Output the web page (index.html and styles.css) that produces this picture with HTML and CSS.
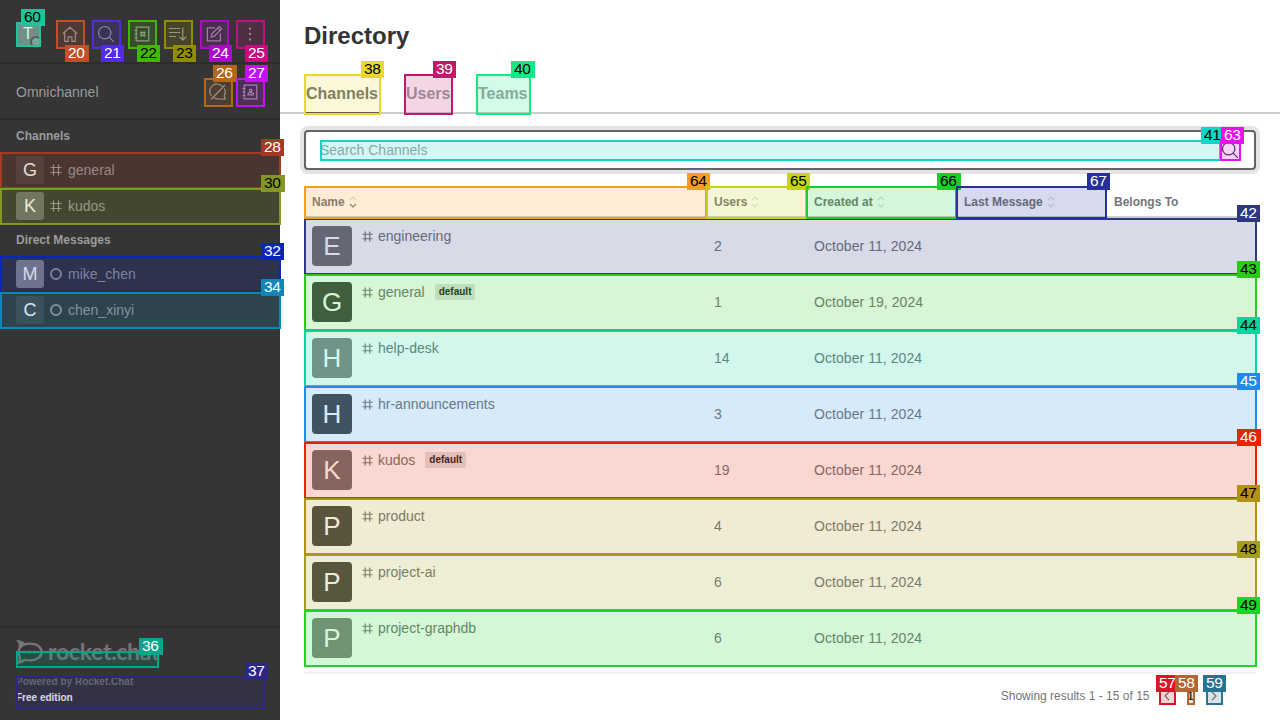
FILE: index.html
```html
<!DOCTYPE html>
<html lang="en">
<head>
<meta charset="utf-8">
<title>Directory</title>
<link rel="stylesheet" href="styles.css">
</head>
<body>
<svg class="defs" aria-hidden="true">
  <symbol id="hash" viewBox="0 0 12 12"><path d="M3.5 .5v11M8.5 .5v11M.5 3.5h11M.5 8.5h11"/></symbol>
  <symbol id="search" viewBox="0 0 20 20"><circle cx="8.7" cy="8.7" r="6.2"/><path d="M13.2 13.2l4.6 4.6"/></symbol>
  <symbol id="sort" viewBox="0 0 8 12"><path class="up" d="M1 4l3-3 3 3"/><path class="down" d="M1 8l3 3 3-3"/></symbol>
</svg>
<div class="app">
  <aside class="sidebar">
    <header class="toolbar">
      <div class="me"><span class="letter">T</span><i class="presence"></i><span class="mark c60"><b class="wide">60</b></span></div>
      <div class="tool"><svg viewBox="0 0 20 20"><path d="M2.8 9.8L10 3.2l7.2 6.6M4.7 8.5v8.8h3.4v-4.4h3.8v4.4h3.4V8.5"/></svg><span class="mark low c20"><b class="wide">20</b></span></div>
      <div class="tool"><svg><use href="#search"/></svg><span class="mark low c21"><b>21</b></span></div>
      <div class="tool"><svg viewBox="0 0 20 20"><path d="M4.2 3.2h12.6v13.6H4.2zM2.5 6.5h3M2.5 10h3M2.5 13.5h3M9.4 7.3v5.4M12.2 7.3v5.4M8.1 8.6h5.4M8.1 11.4h5.4"/></svg><span class="mark low c22"><b>22</b></span></div>
      <div class="tool"><svg viewBox="0 0 20 20"><path d="M1 4.500h11M1 8.500h11M1 12.500h7M14.800 3.500v12.400M11.300 12.700l3.500 3.500 3.500-3.500"/></svg><span class="mark low c23"><b>23</b></span></div>
      <div class="tool"><svg viewBox="0 0 20 20"><path d="M11 3.8H3.4v13h13V9.5M7.2 13l.7-3.2 7.4-7.3 2.4 2.4-7.4 7.3zM13.6 4.2L16 6.6"/></svg><span class="mark low c24"><b>24</b></span></div>
      <div class="tool"><svg viewBox="0 0 20 20"><path class="dots" d="M10 4.6v.01M10 10v.01M10 15.4v.01"/></svg><span class="mark low c25"><b>25</b></span></div>
    </header>
    <div class="omni">
      <span class="omni-title">Omnichannel</span>
      <div class="tool"><svg viewBox="0 0 20 20"><path d="M3.6 14.2A7.2 7.2 0 0 1 14.5 4.4M16.3 6.5a7.2 7.2 0 0 1-.2 7.3l1.2 3.2H10a7.2 7.2 0 0 1-4-1.2M3 17.5L17 3"/></svg><span class="mark c26"><b class="wide">26</b></span></div>
      <div class="tool"><svg viewBox="0 0 20 20"><path d="M4.2 3.2h12.6v13.6H4.2zM2.5 6.5h3M2.5 10h3M2.5 13.5h3M8 12.8v-1.2l1.5-1h2.4l1.5 1v1.2z"/><circle cx="10.7" cy="8.6" r="1.2"/></svg><span class="mark c27"><b>27</b></span></div>
    </div>
    <nav class="rooms">
      <h3>Channels</h3>
      <div class="room"><span class="avatar s42">G</span><svg><use href="#hash"/></svg>general<span class="mark c28"><b>28</b></span></div>
      <div class="room"><span class="avatar s6d">K</span><svg><use href="#hash"/></svg>kudos<span class="mark c30"><b class="wide">30</b></span></div>
      <h3>Direct Messages</h3>
      <div class="room"><span class="avatar s84">M</span><i class="offline"></i>mike_chen<span class="mark c32"><b>32</b></span></div>
      <div class="room"><span class="avatar s46">C</span><i class="offline"></i>chen_xinyi<span class="mark c34"><b>34</b></span></div>
    </nav>
    <footer class="brand">
      <div class="logo">
        <svg viewBox="0 0 27 24"><path class="bubble" d="M0 0C4 0 7 1.200 9 3C19 .8 27 5.500 27 12S19 23 9 21C7 22.800 4 24 0 24C2.600 21.500 3.400 19 2.600 16.800C1 14 1 10 2.600 7.200C3.400 5 2.600 2.500 0 0Z"/><path class="hole" d="M14 4.800C20 4.800 24.300 8 24.300 12S20 19.200 14 19.200C11.500 19.200 9.500 19 8 18.400C7 19.600 6 20.300 4.700 20.700C5.400 19 5.400 17.500 4.700 16C3.500 13.500 3.500 10.500 5 8.200C6.600 6 10 4.800 14 4.800Z"/><circle cx="8.500" cy="12" r="1.400"/><circle cx="13.500" cy="12" r="1.400"/><circle cx="18.500" cy="12" r="1.400"/></svg>
        <span>rocket.chat</span>
        <span class="mark c36"><b class="wide">36</b></span>
      </div>
      <div class="edition"><span class="powered">Powered by Rocket.Chat</span><span class="free">Free edition</span><span class="mark c37"><b>37</b></span></div>
    </footer>
  </aside>
  <main class="page">
    <h1>Directory</h1>
    <div class="tabs">
      <div class="tab active">Channels<span class="mark c38"><b>38</b></span></div>
      <div class="tab users">Users<span class="mark c39"><b>39</b></span></div>
      <div class="tab teams">Teams<span class="mark c40"><b class="wide">40</b></span></div>
    </div>
    <div class="content">
      <div class="search">
        <div class="field">Search Channels<span class="mark c41"><b>41</b></span></div>
        <div class="glass"><svg><use href="#search"/></svg><span class="mark c63"><b>63</b></span></div>
      </div>
      <div class="grid head">
        <div class="cell sorted">Name<svg><use href="#sort"/></svg><span class="mark c64"><b>64</b></span></div>
        <div class="cell">Users<svg><use href="#sort"/></svg><span class="mark c65"><b>65</b></span></div>
        <div class="cell">Created at<svg><use href="#sort"/></svg><span class="mark c66"><b class="wide">66</b></span></div>
        <div class="cell">Last Message<svg><use href="#sort"/></svg><span class="mark c67"><b>67</b></span></div>
        <div class="cell">Belongs To</div>
      </div>
      <div class="grid row"><div class="channel"><span class="avatar big s73">E</span><span class="name"><svg><use href="#hash"/></svg>engineering</span></div><div class="val">2</div><div class="val">October 11, 2024</div><span class="mark c42"><b>42</b></span></div>
      <div class="grid row"><div class="channel"><span class="avatar big s46">G</span><span class="name"><svg><use href="#hash"/></svg>general<em>default</em></span></div><div class="val">1</div><div class="val">October 19, 2024</div><span class="mark c43"><b>43</b></span></div>
      <div class="grid row"><div class="channel"><span class="avatar big s84">H</span><span class="name"><svg><use href="#hash"/></svg>help-desk</span></div><div class="val">14</div><div class="val">October 11, 2024</div><span class="mark c44"><b>44</b></span></div>
      <div class="grid row"><div class="channel"><span class="avatar big s46">H</span><span class="name"><svg><use href="#hash"/></svg>hr-announcements</span></div><div class="val">3</div><div class="val">October 11, 2024</div><span class="mark c45"><b>45</b></span></div>
      <div class="grid row"><div class="channel"><span class="avatar big s73">K</span><span class="name"><svg><use href="#hash"/></svg>kudos<em>default</em></span></div><div class="val">19</div><div class="val">October 11, 2024</div><span class="mark c46"><b class="wide">46</b></span></div>
      <div class="grid row"><div class="channel"><span class="avatar big s46">P</span><span class="name"><svg><use href="#hash"/></svg>product</span></div><div class="val">4</div><div class="val">October 11, 2024</div><span class="mark c47"><b>47</b></span></div>
      <div class="grid row"><div class="channel"><span class="avatar big s46">P</span><span class="name"><svg><use href="#hash"/></svg>project-ai</span></div><div class="val">6</div><div class="val">October 11, 2024</div><span class="mark c48"><b>48</b></span></div>
      <div class="grid row"><div class="channel"><span class="avatar big s84">P</span><span class="name"><svg><use href="#hash"/></svg>project-graphdb</span></div><div class="val">6</div><div class="val">October 11, 2024</div><span class="mark c49"><b>49</b></span></div>
      <div class="pager">
        <span class="count">Showing results 1 - 15 of 15</span>
        <div class="step"><svg viewBox="0 0 16 16"><path d="M10 4L6 8l4 4"/></svg><span class="mark c57"><b>57</b></span></div>
        <div class="current">1<span class="mark c58"><b>58</b></span></div>
        <div class="step"><svg viewBox="0 0 16 16"><path d="M6 4l4 4-4 4"/></svg><span class="mark c59"><b>59</b></span></div>
      </div>
    </div>
  </main>
</div>
</body>
</html>
```
FILE: styles.css
```css
* { box-sizing: border-box; }
body { margin: 0; font: 14px/20px "Liberation Sans", Arial, sans-serif; color: #757575; background: #fff; }
svg { fill: none; stroke: currentColor; stroke-width: 1.2; flex: none; }
h1, h3 { margin: 0; }
.defs { position: absolute; width: 0; height: 0; }
.app { display: flex; width: 1280px; height: 720px; overflow: hidden; }

/* numbered element markers */
.mark { position: absolute; inset: 0 -1px -1px 0; border: 2px solid var(--c); background: color-mix(in srgb, var(--c) 18.5%, transparent); background-clip: padding-box; color: #fff; }
.mark b { position: absolute; top: -15px; left: calc(100% - 18px); width: 23px; height: 17px; padding-left: 3px; background: var(--c); font: 400 15.5px/15px "Liberation Sans", Arial, sans-serif; letter-spacing: -.3px; white-space: nowrap; }
.mark b.wide { width: 24px; }
.mark.low b { top: auto; bottom: -15px; }
.c22, .c23, .c30, .c38, .c40, .c41, .c43, .c44, .c47, .c48, .c49, .c60, .c64, .c65, .c66 { color: #000; }
.c20 { --c: #c24e2b; } .c21 { --c: #512be5; } .c22 { --c: #43b603; } .c23 { --c: #928e04; }
.c24 { --c: #ab0cc3; } .c25 { --c: #c50d80; } .c26 { --c: #b3681c; } .c27 { --c: #c312f6; }
.c28 { --c: #a43a21; } .c30 { --c: #839626; } .c32 { --c: #0b25b7; } .c34 { --c: #0e84b9; }
.c36 { --c: #03a68a; } .c37 { --c: #2e2687; } .c38 { --c: #ead832; } .c39 { --c: #c0196c; }
.c40 { --c: #12ea87; } .c41 { --c: #10d4c7; } .c42 { --c: #2d3882; } .c43 { --c: #2ec71c; }
.c44 { --c: #0cd3a0; } .c45 { --c: #228be6; } .c46 { --c: #e42600; } .c47 { --c: #b48f19; }
.c48 { --c: #a39e23; } .c49 { --c: #1cd627; } .c57 { --c: #dc1428; } .c58 { --c: #b36732; }
.c59 { --c: #277393; } .c60 { --c: #22c29a; } .c63 { --c: #e813ec; } .c64 { --c: #f59c27; }
.c65 { --c: #c6d414; } .c66 { --c: #1ccd2b; } .c67 { --c: #26309b; }

.sidebar { width: 280px; display: flex; flex-direction: column; background: #353535; color: #9b9b9b; flex: none; }
.toolbar { display: flex; height: 64px; padding: 20px 16px 0; gap: 8px; border-bottom: 2px solid #2d2d2d; }
.me { position: relative; width: 24px; height: 24px; margin: 2px 8px 0 0; background: #848484; color: #fff; border-radius: 2px; }
.letter { display: block; text-align: center; font-size: 16px; line-height: 24px; }
.presence { position: absolute; left: 14px; top: 14px; width: 12px; height: 12px; border: 2px solid #4e4e4e; border-radius: 50%; background: #9a9a9a; }
.tool { position: relative; width: 28px; height: 28px; padding: 4px; }
.tool svg { display: block; width: 20px; height: 20px; }
.dots { stroke-width: 2.400; stroke-linecap: round; }
.omni { display: flex; height: 56px; padding: 2px 16px 0; gap: 4px; align-items: center; border-bottom: 2px solid #2d2d2d; }
.omni-title { flex: 1; }
.rooms { flex: 1; }
.rooms h3 { height: 32px; padding-left: 16px; font-size: 12px; line-height: 32px; }
.room { position: relative; display: flex; align-items: center; height: 36px; padding-left: 16px; color: #9a9a9a; }
.room svg { width: 12px; height: 12px; margin: 0 6px; }
.offline { width: 12px; height: 12px; margin: 0 6px; border: 2px solid #949494; border-radius: 50%; }
.avatar { display: block; width: 28px; height: 28px; border-radius: 3px; text-align: center; color: #fff; font-size: 18px; line-height: 28px; flex: none; }
.big { width: 40px; height: 40px; font-size: 26px; line-height: 41px; border-radius: 4px; }
.s42 { background: #444; } .s46 { background: #464646; } .s6d { background: #6f6f6f; } .s73 { background: #737373; } .s84 { background: #858585; }
.brand { height: 94px; padding: 12px 16px 0; border-top: 2px solid #2d2d2d; }
.logo { position: relative; display: flex; width: 142px; height: 27px; color: #757575; font: 700 23px/23px Lato, sans-serif; letter-spacing: -.3px; }
.logo > svg { width: 27px; height: 24px; stroke: none; fill: #757575; margin-right: 5px; }
.logo .hole { fill: #353535; }
.logo .mark { top: 11px; }
.edition { position: relative; display: flex; flex-direction: column; width: 248px; height: 32px; margin-top: 7px; font: 700 10px/16px "Liberation Sans", Arial, sans-serif; }
.edition .mark { top: 2px; bottom: -3px; }
.powered { color: #747474; }
.free { color: #fff; }

.page { flex: 1; }
h1 { padding: 20px 24px 0; height: 74px; font-size: 24px; line-height: 32px; color: #333; }
.tabs { display: flex; gap: 24px; height: 40px; padding: 0 24px; box-shadow: inset 0 -2px #ccc; }
.tab { position: relative; width: 76px; padding: 0 2px; font-size: 16px; font-weight: 700; line-height: 39px; color: #9e9e9e; white-space: nowrap; }
.tab.users { width: 48px; }
.tab.teams { width: 54px; }
.tab.active { color: #6a6a6a; box-shadow: inset 0 -2px #444; }
.content { padding: 16px 24px 0; }
.search { display: flex; height: 40px; padding: 8px 14px; border: 2px solid #646464; border-radius: 4px; box-shadow: 0 0 0 4px #e4e4e4; }
.field { position: relative; flex: 1; color: #a0a0a0; }
.glass { position: relative; width: 20px; height: 20px; color: #333; }
.glass svg { display: block; width: 20px; height: 20px; }
.grid { display: grid; grid-template-columns: 402px 100px 150px 150px 150px; }
.head { margin-top: 16px; height: 32px; font-size: 12px; font-weight: 700; box-shadow: inset 0 -2px #ccc; }
.head .mark { z-index: 2; }
.cell { position: relative; display: flex; align-items: center; padding-left: 8px; }
.cell svg { width: 8px; height: 12px; margin: 0 0 0 4px; color: #dcdcdc; --down: #dcdcdc; }
.down { stroke: var(--down); }
.sorted svg { --down: #7a7a7a; }
.row { position: relative; height: 56px; align-items: center; }
.channel { display: flex; gap: 10px; padding-left: 8px; }
.name { display: flex; height: 20px; align-items: center; }
.name svg { width: 11px; height: 11px; margin-right: 5px; }
.name em { margin-left: 10px; padding: 0 4px; border-radius: 2px; background: #e2e2e2; color: #222; font: 700 10px/16px "Liberation Sans", Arial, sans-serif; }
.val { padding-left: 8px; letter-spacing: .06px; }
.pager { display: flex; align-items: center; margin-top: 6px; height: 48px; padding: 0 34px 2px 0; border-top: 2px solid #f2f2f2; font-size: 12px; justify-content: flex-end; }
.count { margin-right: 9.5px; }
.step, .current { position: relative; height: 16px; }
.step { width: 16px; }
.step svg { display: block; width: 16px; height: 16px; }
.current { width: 7px; margin: 0 12px; line-height: 16px; font-weight: 700; color: #222; }
```
